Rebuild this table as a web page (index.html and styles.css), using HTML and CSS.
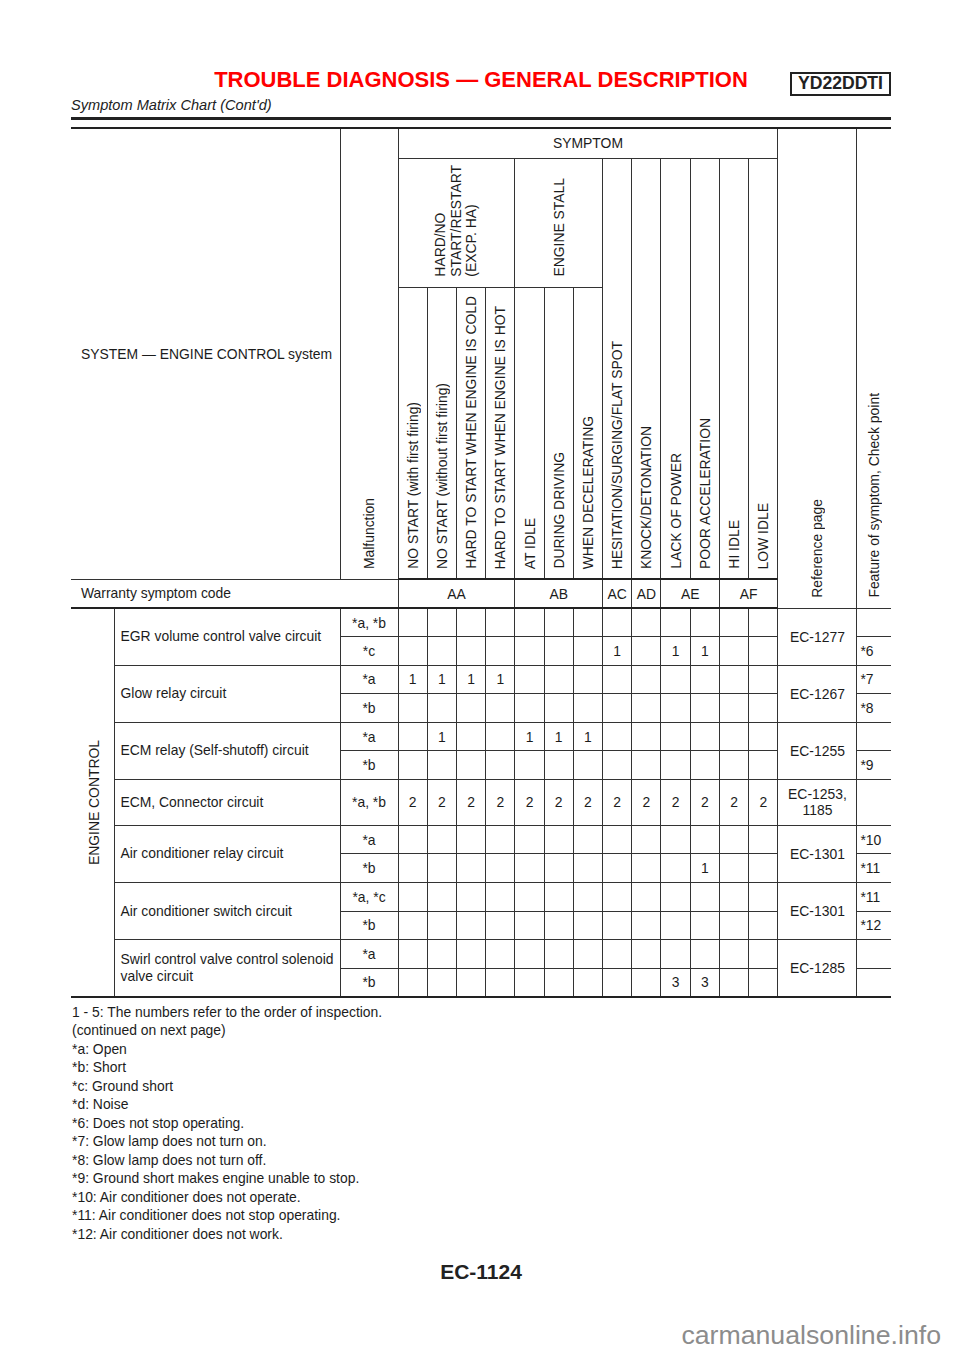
FILE: index.html
```html
<!DOCTYPE html>
<html lang="en">
<head>
<meta charset="utf-8">
<title>Symptom Matrix Chart</title>
<link rel="stylesheet" href="styles.css">
</head>
<body>
<div class="page">
  <header class="hdr">
    <div class="title-row">
      <h1 class="title">TROUBLE DIAGNOSIS — GENERAL DESCRIPTION</h1>
      <div class="badge">YD22DDTI</div>
    </div>
    <div class="subtitle">Symptom Matrix Chart (Cont'd)</div>
    <div class="rule"></div>
  </header>

  <table class="matrix">
    <colgroup>
      <col class="c-grp"><col class="c-name"><col class="c-code">
      <col class="c-s"><col class="c-s"><col class="c-s"><col class="c-s"><col class="c-s"><col class="c-s"><col class="c-s">
      <col class="c-s"><col class="c-s"><col class="c-s"><col class="c-s"><col class="c-s"><col class="c-s">
      <col class="c-ref"><col class="c-feat">
    </colgroup>
    <tbody>
      <tr class="h-r1">
        <td class="sys" colspan="2" rowspan="3">SYSTEM — ENGINE CONTROL system</td>
        <td class="vl" rowspan="3"><div class="vw"><span class="v">Malfunction</span></div></td>
        <td colspan="13">SYMPTOM</td>
        <td class="vl vl-ref" rowspan="4"><div class="vw"><span class="v">Reference page</span></div></td>
        <td class="vl vl-ref" rowspan="4"><div class="vw"><span class="v">Feature of symptom, Check point</span></div></td>
      </tr>
      <tr class="h-r2">
        <td class="vl vl-grp" colspan="4"><div class="vw"><span class="v multi">HARD/NO<br>START/RESTART<br>(EXCP. HA)</span></div></td>
        <td class="vl vl-grp" colspan="3"><div class="vw"><span class="v">ENGINE STALL</span></div></td>
        <td class="vl" rowspan="2"><div class="vw"><span class="v">HESITATION/SURGING/FLAT SPOT</span></div></td>
        <td class="vl" rowspan="2"><div class="vw"><span class="v">KNOCK/DETONATION</span></div></td>
        <td class="vl" rowspan="2"><div class="vw"><span class="v">LACK OF POWER</span></div></td>
        <td class="vl" rowspan="2"><div class="vw"><span class="v">POOR ACCELERATION</span></div></td>
        <td class="vl" rowspan="2"><div class="vw"><span class="v">HI IDLE</span></div></td>
        <td class="vl" rowspan="2"><div class="vw"><span class="v">LOW IDLE</span></div></td>
      </tr>
      <tr class="h-r3">
        <td class="vl"><div class="vw"><span class="v">NO START (with first firing)</span></div></td>
        <td class="vl"><div class="vw"><span class="v">NO START (without first firing)</span></div></td>
        <td class="vl"><div class="vw"><span class="v">HARD TO START WHEN ENGINE IS COLD</span></div></td>
        <td class="vl"><div class="vw"><span class="v">HARD TO START WHEN ENGINE IS HOT</span></div></td>
        <td class="vl"><div class="vw"><span class="v">AT IDLE</span></div></td>
        <td class="vl"><div class="vw"><span class="v">DURING DRIVING</span></div></td>
        <td class="vl"><div class="vw"><span class="v">WHEN DECELERATING</span></div></td>
      </tr>
      <tr class="h-war">
        <td class="sys" colspan="3">Warranty symptom code</td>
        <td colspan="4">AA</td>
        <td colspan="3">AB</td>
        <td>AC</td>
        <td>AD</td>
        <td colspan="2">AE</td>
        <td colspan="2">AF</td>
      </tr>

      <!-- EGR -->
      <tr class="sub first">
        <td class="grp" rowspan="13"><div class="vw"><span class="v">ENGINE CONTROL</span></div></td>
        <td class="name" rowspan="2">EGR volume control valve circuit</td>
        <td>*a, *b</td>
        <td></td><td></td><td></td><td></td><td></td><td></td><td></td><td></td><td></td><td></td><td></td><td></td><td></td>
        <td rowspan="2">EC-1277</td>
        <td class="ft"></td>
      </tr>
      <tr class="sub">
        <td>*c</td>
        <td></td><td></td><td></td><td></td><td></td><td></td><td></td><td>1</td><td></td><td>1</td><td>1</td><td></td><td></td>
        <td class="ft">*6</td>
      </tr>

      <!-- Glow relay -->
      <tr class="sub">
        <td class="name" rowspan="2">Glow relay circuit</td>
        <td>*a</td>
        <td>1</td><td>1</td><td>1</td><td>1</td><td></td><td></td><td></td><td></td><td></td><td></td><td></td><td></td><td></td>
        <td rowspan="2">EC-1267</td>
        <td class="ft">*7</td>
      </tr>
      <tr class="sub">
        <td>*b</td>
        <td></td><td></td><td></td><td></td><td></td><td></td><td></td><td></td><td></td><td></td><td></td><td></td><td></td>
        <td class="ft">*8</td>
      </tr>

      <!-- ECM relay -->
      <tr class="sub">
        <td class="name" rowspan="2">ECM relay (Self-shutoff) circuit</td>
        <td>*a</td>
        <td></td><td>1</td><td></td><td></td><td>1</td><td>1</td><td>1</td><td></td><td></td><td></td><td></td><td></td><td></td>
        <td rowspan="2">EC-1255</td>
        <td class="ft"></td>
      </tr>
      <tr class="sub">
        <td>*b</td>
        <td></td><td></td><td></td><td></td><td></td><td></td><td></td><td></td><td></td><td></td><td></td><td></td><td></td>
        <td class="ft">*9</td>
      </tr>

      <!-- ECM connector -->
      <tr class="tall">
        <td class="name">ECM, Connector circuit</td>
        <td>*a, *b</td>
        <td>2</td><td>2</td><td>2</td><td>2</td><td>2</td><td>2</td><td>2</td><td>2</td><td>2</td><td>2</td><td>2</td><td>2</td><td>2</td>
        <td>EC-1253,<br>1185</td>
        <td class="ft"></td>
      </tr>

      <!-- AC relay -->
      <tr class="sub">
        <td class="name" rowspan="2">Air conditioner relay circuit</td>
        <td>*a</td>
        <td></td><td></td><td></td><td></td><td></td><td></td><td></td><td></td><td></td><td></td><td></td><td></td><td></td>
        <td rowspan="2">EC-1301</td>
        <td class="ft">*10</td>
      </tr>
      <tr class="sub">
        <td>*b</td>
        <td></td><td></td><td></td><td></td><td></td><td></td><td></td><td></td><td></td><td></td><td>1</td><td></td><td></td>
        <td class="ft">*11</td>
      </tr>

      <!-- AC switch -->
      <tr class="sub">
        <td class="name" rowspan="2">Air conditioner switch circuit</td>
        <td>*a, *c</td>
        <td></td><td></td><td></td><td></td><td></td><td></td><td></td><td></td><td></td><td></td><td></td><td></td><td></td>
        <td rowspan="2">EC-1301</td>
        <td class="ft">*11</td>
      </tr>
      <tr class="sub">
        <td>*b</td>
        <td></td><td></td><td></td><td></td><td></td><td></td><td></td><td></td><td></td><td></td><td></td><td></td><td></td>
        <td class="ft">*12</td>
      </tr>

      <!-- Swirl -->
      <tr class="sub">
        <td class="name" rowspan="2">Swirl control valve control solenoid valve circuit</td>
        <td>*a</td>
        <td></td><td></td><td></td><td></td><td></td><td></td><td></td><td></td><td></td><td></td><td></td><td></td><td></td>
        <td rowspan="2">EC-1285</td>
        <td class="ft"></td>
      </tr>
      <tr class="sub">
        <td>*b</td>
        <td></td><td></td><td></td><td></td><td></td><td></td><td></td><td></td><td></td><td>3</td><td>3</td><td></td><td></td>
        <td class="ft"></td>
      </tr>
    </tbody>
  </table>

  <div class="notes">
    <div>1 - 5: The numbers refer to the order of inspection.</div>
    <div>(continued on next page)</div>
    <div>*a: Open</div>
    <div>*b: Short</div>
    <div>*c: Ground short</div>
    <div>*d: Noise</div>
    <div>*6: Does not stop operating.</div>
    <div>*7: Glow lamp does not turn on.</div>
    <div>*8: Glow lamp does not turn off.</div>
    <div>*9: Ground short makes engine unable to stop.</div>
    <div>*10: Air conditioner does not operate.</div>
    <div>*11: Air conditioner does not stop operating.</div>
    <div>*12: Air conditioner does not work.</div>
  </div>

  <div class="pageno">EC-1124</div>
</div>
<div class="wm">carmanualsonline.info</div>
</body>
</html>
```

FILE: styles.css
```css
* { box-sizing: border-box; }

html, body {
  margin: 0;
  background: #ffffff;
}

body {
  color: #1c1c1c;
  font-family: "Liberation Sans", Arial, Helvetica, sans-serif;
  width: 960px;
}

.page {
  width: 820px;
  margin-left: 71px;
  padding-top: 67px;
}

/* ---------- header ---------- */
.title-row {
  display: grid;
  grid-template-columns: 1fr auto 1fr;
  align-items: start;
}

.title {
  grid-column: 2;
  margin: 0;
  font-size: 22px;
  line-height: 25px;
  font-weight: bold;
  color: #ff0000;
  white-space: nowrap;
}

.badge {
  grid-column: 3;
  justify-self: end;
  margin-top: 5px;
  border: 2px solid #222;
  padding: 0 6px;
  font-size: 17.6px;
  line-height: 19.5px;
  font-weight: bold;
  color: #222;
}

.subtitle {
  margin-top: 1px;
  font-style: italic;
  font-size: 14.6px;
  line-height: 17px;
  color: #222;
}

.rule {
  height: 3px;
  background: #222;
  margin-top: 3.5px;
}

/* ---------- matrix table ---------- */
.matrix {
  margin-top: 7px;
  width: 820px;
  table-layout: fixed;
  border-collapse: collapse;
  border-top: 2px solid #222;
  border-bottom: 2px solid #222;
  border-left: hidden;
  border-right: hidden;
  font-size: 13.9px;
  color: #1c1c1c;
}

.c-grp  { width: 43px; }
.c-name { width: 226px; }
.c-code { width: 58px; }
.c-s    { width: 29.23px; }
.c-ref  { width: 79px; }
.c-feat { width: 34px; }

.matrix td {
  border: 1px solid #333;
  padding: 0;
  text-align: center;
  vertical-align: middle;
  line-height: 16px;
  white-space: nowrap;
}

.h-r1 { height: 30px; }
.h-r2 { height: 129px; }
.h-r3 { height: 292px; }
.h-war { height: 29px; }
.h-war td { border-bottom: 2px solid #222; }
.h-r3 td { border-bottom: 2px solid #222; }
.h-r2 td[rowspan] { border-bottom: 2px solid #222; }

.sub  { height: 28.6px; }
.tall { height: 45.7px; }

.matrix td.sys {
  text-align: left;
  padding-left: 10px;
}

.matrix td.name {
  text-align: left;
  padding-left: 6px;
  white-space: normal;
  line-height: 17px;
}

.matrix td.ft {
  text-align: left;
  padding-left: 3px;
}

/* vertical labels */
.matrix td.vl {
  vertical-align: bottom;
  padding-bottom: 9px;
}

.matrix td.vl-grp { padding-bottom: 10px; }
.matrix td.vl-ref { padding-bottom: 10px; }

.vw {
  display: flex;
  justify-content: center;
}

.v {
  writing-mode: vertical-rl;
  transform: rotate(180deg);
  text-align: left;
  white-space: nowrap;
  line-height: 16px;
}

.v.multi { line-height: 15.5px; }

.matrix td.grp {
  vertical-align: middle;
  padding-left: 3px;
}

/* ---------- notes ---------- */
.notes {
  margin-top: 5px;
  padding-left: 1px;
  font-size: 13.9px;
  line-height: 18.5px;
  color: #1c1c1c;
}

.pageno {
  margin-top: 17px;
  text-align: center;
  font-size: 21px;
  line-height: 24px;
  font-weight: bold;
  color: #222;
}

.wm {
  margin-top: 37px;
  padding-right: 19px;
  text-align: right;
  font-size: 26.7px;
  line-height: 28px;
  color: #8c8c8c;
}
```
